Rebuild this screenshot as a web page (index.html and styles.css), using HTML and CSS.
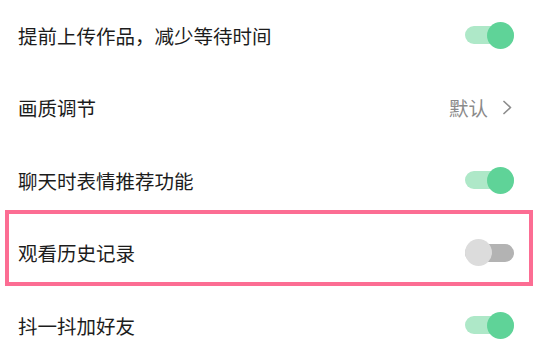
FILE: index.html
```html
<!DOCTYPE html>
<html lang="zh-CN">
<head>
<meta charset="utf-8">
<link rel="stylesheet" href="styles.css">
</head>
<body>
<div class="list">
  <div class="row">
    <span class="label">提前上传作品，减少等待时间</span>
    <span class="toggle on"><span class="knob"></span></span>
  </div>
  <div class="row">
    <span class="label">画质调节</span>
    <span class="value">默认
      <svg class="chev" width="10" height="15" viewBox="0 0 10 15"><path d="M2 1.5 L8.5 7.5 L2 13.5" fill="none" stroke="#8c8c8c" stroke-width="1.7" stroke-linecap="round" stroke-linejoin="round"/></svg>
    </span>
  </div>
  <div class="row">
    <span class="label">聊天时表情推荐功能</span>
    <span class="toggle on"><span class="knob"></span></span>
  </div>
  <div class="row">
    <span class="label">观看历史记录</span>
    <span class="toggle off"><span class="knob"></span></span>
  </div>
  <div class="row">
    <span class="label">抖一抖加好友</span>
    <span class="toggle on"><span class="knob"></span></span>
  </div>
  <div class="highlight"></div>
</div>
</body>
</html>
```

FILE: styles.css
```css
html, body {
  margin: 0;
  padding: 0;
  background: #ffffff;
}
body {
  width: 533px;
  height: 359px;
  overflow: hidden;
  font-family: "Noto Sans CJK SC", "Noto Sans", sans-serif;
}
.list {
  position: relative;
}
.row {
  height: 72.5px;
  display: flex;
  align-items: center;
  justify-content: space-between;
  padding: 0 19px 0 18px;
}
.row:first-child {
  margin-top: -1px;
}
.label {
  font-size: 19.5px;
  color: #1c1c1c;
}
.value {
  display: flex;
  align-items: center;
  gap: 14px;
  font-size: 19.5px;
  color: #8a8a8a;
  margin-right: 2px;
}
.chev {
  display: block;
}
.toggle {
  position: relative;
  width: 49px;
  height: 18px;
  border-radius: 9px;
}
.toggle.on {
  background: #aee8c8;
}
.toggle.off {
  background: #b3b3b3;
}
.knob {
  position: absolute;
  top: -4.5px;
  width: 27px;
  height: 27px;
  border-radius: 50%;
}
.toggle.on .knob {
  right: 0;
  background: #5fd398;
}
.toggle.off .knob {
  left: 0;
  background: #dcdcdc;
}
.highlight {
  position: absolute;
  left: 5px;
  top: 211px;
  width: 520px;
  height: 68px;
  border: 4px solid #fc6d93;
  pointer-events: none;
}
```
